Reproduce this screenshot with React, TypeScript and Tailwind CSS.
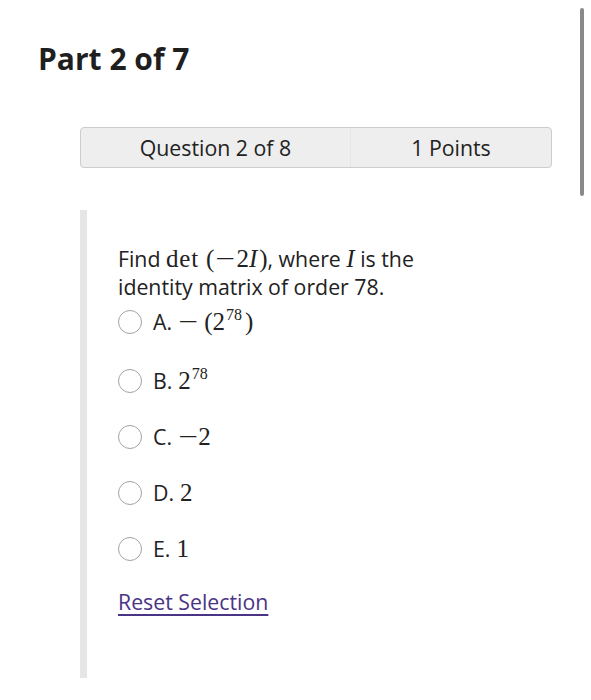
import React from "react";

const serif = { fontFamily: '"Liberation Serif", "DejaVu Serif", serif' };

function Radio() {
  return <span className="inline-block w-[24px] h-[24px] rounded-full border-[1.5px] border-[#a3a3a3] bg-white shrink-0" />;
}

function Minus({ className = "" }: { className?: string }) {
  return <span className={`inline-block scale-x-[1.4] ${className}`}>−</span>;
}

function Sup({ children }: { children: React.ReactNode }) {
  return <span className="relative -top-[10px] text-[16px] leading-none ml-[1px]">{children}</span>;
}

function Option({ label, children, className }: { label: string; children: React.ReactNode; className: string }) {
  return (
    <div className={`flex items-center gap-[11px] ${className}`}>
      <Radio />
      <div className="flex items-baseline gap-[6px] text-[21.3px] text-[#222]">
        <span>{label}</span>
        <span className="text-[25px] leading-[28px]" style={serif}>{children}</span>
      </div>
    </div>
  );
}

export default function App() {
  return (
    <div className="relative w-full h-[700px] bg-white text-[#222]" style={{ fontFamily: '"Open Sans", "Noto Sans", sans-serif' }}>
      <div className="absolute left-[580px] top-[8px] w-[4px] h-[188px] rounded-full bg-[#8a8a8a]" />
      <div className="pt-[39px] pl-[38px]">
        <h1 className="text-[30px] font-bold leading-[40px] text-[#1f1f1f]">Part 2 of 7</h1>
      </div>
      <div className="mt-[48px] ml-[80px] w-[472px] h-[41px] flex border border-[#cdcdcd] rounded-[4px] bg-[#eeeeee] text-[21.3px] text-[#222]">
        <div className="w-[270px] flex items-center justify-center border-r border-[#e6e6e6]">Question 2 of 8</div>
        <div className="flex-1 flex items-center justify-center">1 Points</div>
      </div>
      <div className="mt-[42px] ml-[80px] h-[468px] border-l-[7px] border-[#e6e6e6] pl-[31px] pt-[35px]">
        <p className="text-[21.3px] leading-[28px] w-[330px]">
          Find{" "}
          <span className="text-[25px] leading-[28px]" style={serif}>
            <span className="tracking-[0.8px]">det</span>
            <span className="ml-[7px]">(</span>
            <Minus className="mx-[4px]" />2<i className="mr-[2px]">I</i>)
          </span>
          , where <i className="text-[25px] leading-[28px]" style={serif}>I</i> is the identity matrix of order 78.
        </p>
        <Option label="A." className="h-[42px]">
          <Minus className="ml-[3px] mr-[9px]" />(2<Sup>78</Sup><span className="ml-[3px]">)</span>
        </Option>
        <Option label="B." className="h-[56px] mt-[10px]">
          2<Sup>78</Sup>
        </Option>
        <Option label="C." className="h-[56px]">
          <Minus className="mx-[3px]" />2
        </Option>
        <Option label="D." className="h-[56px]">2</Option>
        <Option label="E." className="h-[56px]">1</Option>
        <a href="#" className="block mt-[11px] text-[21.3px] leading-[28px] text-[#4a3486] underline underline-offset-[4px] w-fit">Reset Selection</a>
      </div>
    </div>
  );
}
